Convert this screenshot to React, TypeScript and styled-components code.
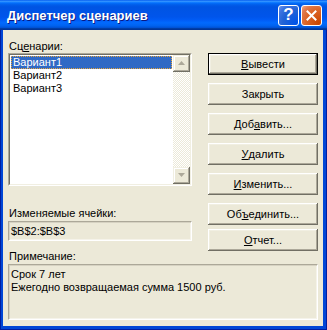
import React from 'react';
import styled, { createGlobalStyle } from 'styled-components';

const Global = createGlobalStyle`
  html, body { margin: 0; padding: 0; background: #fff; }
  body { font-family: "Liberation Sans", Arial, sans-serif; font-size: 11px; color: #000; }
`;

const Window = styled.div`
  width: 327px;
  height: 330px;
  box-sizing: border-box;
  display: flex;
  flex-direction: column;
  background: #0046d6;
  box-shadow: inset 1px 0 #001ea0, inset -1px 0 #001ea0, inset 0 -1px #001ea0;
`;

const TitleBar = styled.div`
  height: 30px;
  flex: none;
  display: flex;
  align-items: center;
  box-sizing: border-box;
  padding: 0 5px 0 7px;
  background: linear-gradient(
    180deg,
    #0058ee 0%,
    #3593ff 4%,
    #288eff 6%,
    #127dff 8%,
    #036ffc 10%,
    #0262ee 14%,
    #0057e5 20%,
    #0054e3 24%,
    #0055eb 56%,
    #005bf5 66%,
    #026afe 76%,
    #0062ef 86%,
    #0052d6 92%,
    #0040ab 94%,
    #003092 100%
  );
`;

const Title = styled.div`
  flex: 1;
  color: #fff;
  font: bold 13px "Liberation Sans", Arial, sans-serif;
  text-shadow: 1px 1px #0a1883;
  padding-top: 1px;
`;

const CaptionButtons = styled.div`
  display: flex;
  gap: 2px;
`;

const CaptionButton = styled.div<{ $variant: 'help' | 'close' }>`
  width: 21px;
  height: 21px;
  box-sizing: border-box;
  border: 1px solid #fff;
  border-radius: 3px;
  display: flex;
  align-items: center;
  justify-content: center;
  color: #fff;
  font: bold 17px "Liberation Sans", Arial, sans-serif;
  background: ${(p) =>
    p.$variant === 'close'
      ? 'radial-gradient(circle at 90% 90%, #cc4600 0%, #dc6527 55%, #e07a4e 80%, #f2a889 100%)'
      : 'radial-gradient(circle at 90% 90%, #0054e9 0%, #2263d5 55%, #3d74e0 80%, #6e97ea 100%)'};
`;

const Client = styled.div`
  flex: 1;
  min-height: 0;
  margin: 0 4px 4px 3px;
  background: #ece9d8;
  padding: 10px 5px 6px 5px;
  display: grid;
  grid-template-columns: 184px 110px;
  grid-template-rows: auto auto 1fr;
  grid-template-areas:
    'left buttons'
    'notelabel buttons'
    'notes notes';
  column-gap: 16px;
`;

const LeftColumn = styled.div`
  grid-area: left;
  display: flex;
  flex-direction: column;
`;

const Label = styled.div<{ $gap?: number; $area?: string }>`
  ${(p) => (p.$area ? `grid-area: ${p.$area};` : '')}
  height: 13px;
  line-height: 13px;
  padding-left: 1px;
  margin-top: ${(p) => p.$gap ?? 0}px;
  white-space: nowrap;
`;

const Key = styled.span`
  text-decoration: underline;
  text-underline-offset: 1px;
`;

const SunkenOuter = styled.div<{ $height: number }>`
  height: ${(p) => p.$height}px;
  box-sizing: border-box;
  border: 1px solid;
  border-color: #aca899 #fff #fff #aca899;
  display: flex;
`;

const SunkenInner = styled.div`
  flex: 1;
  display: flex;
  border: 1px solid;
  border-color: #716f64 #f1efe2 #f1efe2 #716f64;
  background: #fff;
  min-width: 0;
`;

const Items = styled.div`
  flex: 1;
  padding: 1px;
  display: flex;
  flex-direction: column;
`;

const Item = styled.div<{ $selected?: boolean }>`
  height: 13px;
  line-height: 13px;
  padding-left: 2px;
  white-space: nowrap;
  background: ${(p) => (p.$selected ? '#316ac5' : 'transparent')};
  color: ${(p) => (p.$selected ? '#fff' : '#000')};
  outline: ${(p) => (p.$selected ? '1px dotted #e9a63b' : 'none')};
  outline-offset: -1px;
`;

const ScrollBar = styled.div`
  width: 17px;
  display: flex;
  flex-direction: column;
`;

const ScrollTrack = styled.div`
  flex: 1;
  background: repeating-conic-gradient(#fff 0 25%, #ece9d8 0 50%) 0 0 / 2px 2px;
`;

const ScrollButton = styled.div`
  width: 17px;
  height: 17px;
  box-sizing: border-box;
  background: #ece9d8;
  box-shadow: inset -1px -1px #716f64, inset 1px 1px #f1efe2, inset -2px -2px #aca899,
    inset 2px 2px #fff;
  display: flex;
  align-items: center;
  justify-content: center;
`;

const ButtonColumn = styled.div`
  grid-area: buttons;
  align-self: start;
  display: flex;
  flex-direction: column;
  padding-top: 13px;
`;

const Button = styled.div<{ $default?: boolean; $gap?: number }>`
  height: 22px;
  margin-top: ${(p) => p.$gap ?? 0}px;
  box-sizing: border-box;
  display: flex;
  align-items: center;
  justify-content: center;
  background: #ece9d8;
  white-space: nowrap;
  box-shadow: ${(p) =>
    p.$default
      ? 'inset 0 0 0 1px #000, inset -2px -2px #716f64, inset 2px 2px #fff, inset -3px -3px #aca899, inset 3px 3px #f1efe2'
      : 'inset -1px -1px #716f64, inset 1px 1px #fff, inset -2px -2px #aca899, inset 2px 2px #f1efe2'};
`;

const Field = styled.div<{ $height?: number; $area?: string }>`
  ${(p) => (p.$area ? `grid-area: ${p.$area};` : '')}
  ${(p) => (p.$height ? `height: ${p.$height}px;` : '')}
  margin-top: 1px;
  box-sizing: border-box;
  border: 1px solid;
  border-color: #aca899 #fff #fff #aca899;
  box-shadow: inset 1px 1px #d6d2c2, inset -1px -1px #f5f3ea;
  padding: 3px 0 0 2px;
  line-height: 13px;
  white-space: nowrap;
  overflow: hidden;
`;

const UpArrow = () => (
  <svg width="7" height="5" viewBox="0 0 7 5">
    <polygon points="3.5,0 7,4 0,4" fill="#aca899" />
  </svg>
);

const DownArrow = () => (
  <svg width="7" height="5" viewBox="0 0 7 5">
    <polygon points="0,0 7,0 3.5,4" fill="#aca899" />
  </svg>
);

const CloseGlyph = () => (
  <svg width="11" height="11" viewBox="0 0 11 11">
    <path d="M1.5 1.5 L9.5 9.5 M9.5 1.5 L1.5 9.5" stroke="#fff" strokeWidth="2" strokeLinecap="square" />
  </svg>
);

const scenarios = ['Вариант1', 'Вариант2', 'Вариант3'];

export default function App() {
  return (
    <>
      <Global />
      <Window>
        <TitleBar>
          <Title>Диспетчер сценариев</Title>
          <CaptionButtons>
            <CaptionButton $variant="help">?</CaptionButton>
            <CaptionButton $variant="close">
              <CloseGlyph />
            </CaptionButton>
          </CaptionButtons>
        </TitleBar>
        <Client>
          <LeftColumn>
            <Label>
              Сц<Key>е</Key>нарии:
            </Label>
            <SunkenOuter $height={133}>
              <SunkenInner>
                <Items>
                  {scenarios.map((s, i) => (
                    <Item key={s} $selected={i === 0}>
                      {s}
                    </Item>
                  ))}
                </Items>
                <ScrollBar>
                  <ScrollButton>
                    <UpArrow />
                  </ScrollButton>
                  <ScrollTrack />
                  <ScrollButton>
                    <DownArrow />
                  </ScrollButton>
                </ScrollBar>
              </SunkenInner>
            </SunkenOuter>
            <Label $gap={21}>Изменяемые ячейки:</Label>
            <Field $height={20}>$B$2:$B$3</Field>
          </LeftColumn>
          <ButtonColumn>
            <Button $default>
              <Key>В</Key>ывести
            </Button>
            <Button $gap={8}>Закрыть</Button>
            <Button $gap={8}>
              Доб<Key>а</Key>вить...
            </Button>
            <Button $gap={8}>
              <Key>У</Key>далить
            </Button>
            <Button $gap={8}>
              <Key>И</Key>зменить...
            </Button>
            <Button $gap={8}>
              Об<Key>ъ</Key>единить...
            </Button>
            <Button $gap={4}>
              <Key>О</Key>тчет...
            </Button>
          </ButtonColumn>
          <Label $area="notelabel" $gap={9}>
            Примечание:
          </Label>
          <Field $area="notes">
            Срок 7 лет
            <br />
            Ежегодно возвращаемая сумма 1500 руб.
          </Field>
        </Client>
      </Window>
    </>
  );
}
